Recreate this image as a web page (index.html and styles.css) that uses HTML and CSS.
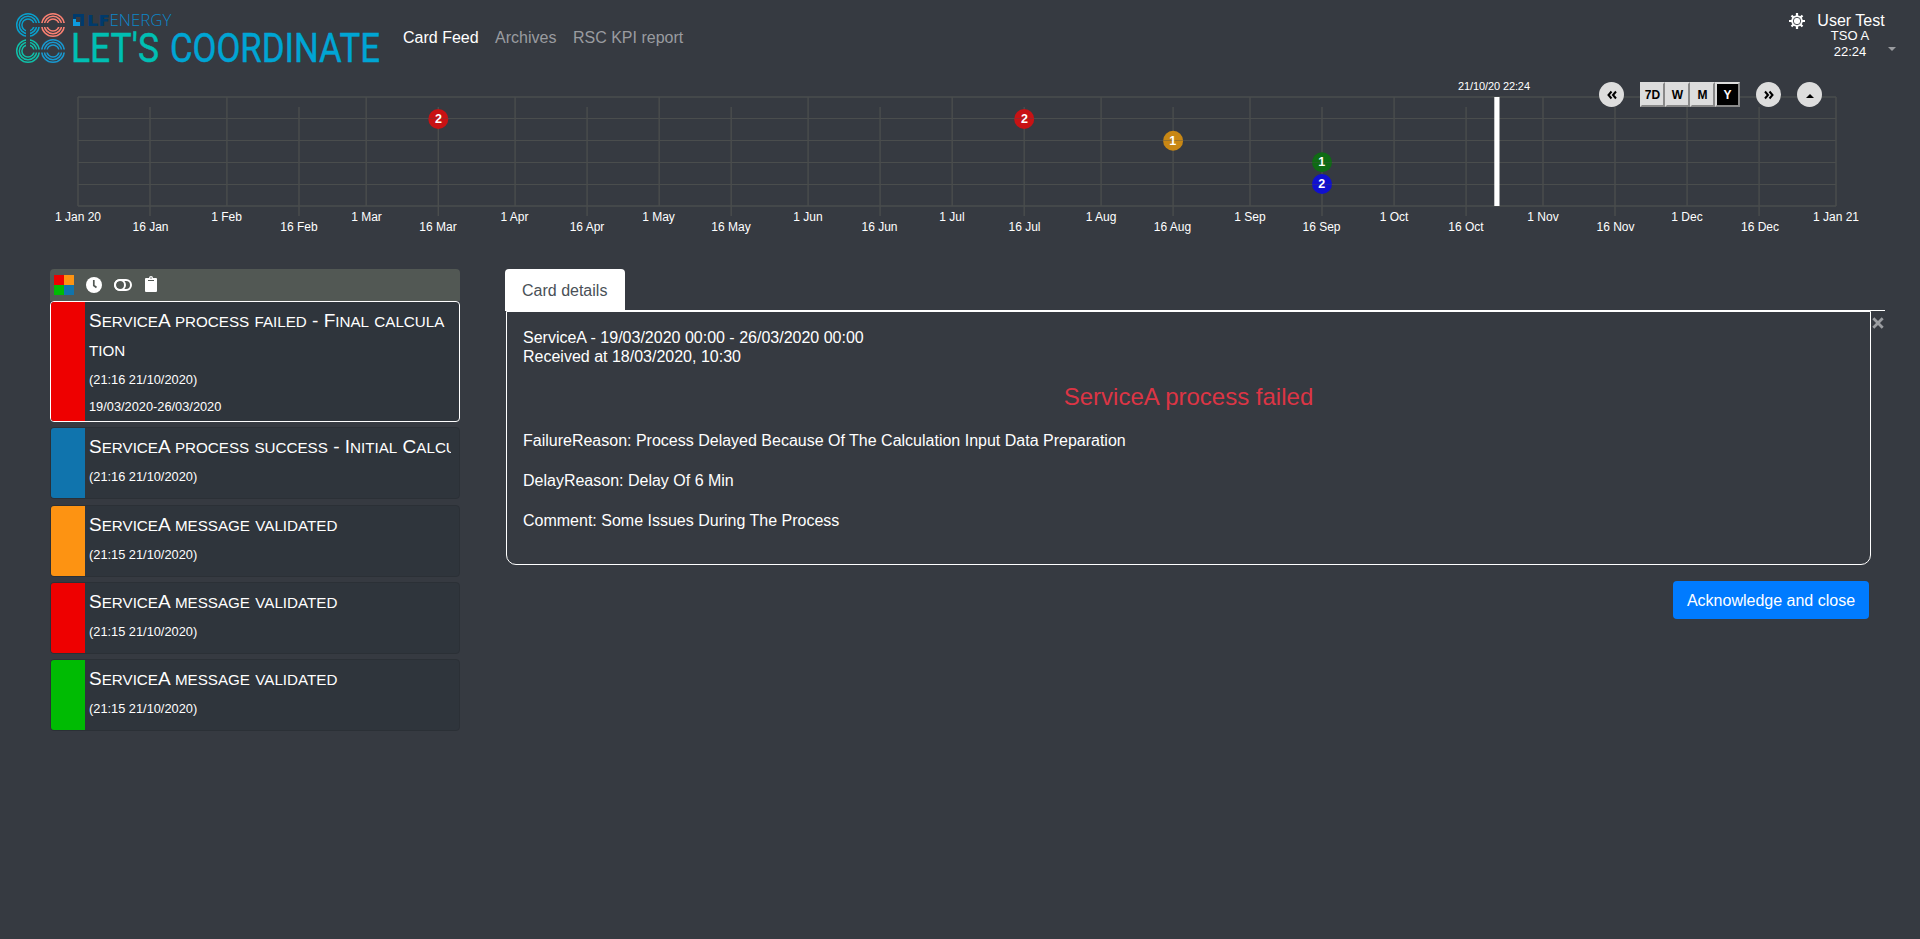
FILE: index.html
```html
<!DOCTYPE html>
<html lang="en">
<head>
<meta charset="utf-8">
<title>Let's Coordinate</title>
<link rel="stylesheet" href="styles.css">
</head>
<body>
<header class="topbar">
  <svg class="logo" width="390" height="72" viewBox="0 0 390 72">
    <defs>
      <g id="rings" fill="none" stroke-width="1.5">
        <circle r="11.3"/><circle r="8.7"/><circle r="6.1"/>
      </g>
    </defs>
    <g stroke="#0a9fcc"><use href="#rings" x="28" y="25"/></g>
    <g stroke="#fa8072"><use href="#rings" x="53" y="25"/></g>
    <g stroke="#10bfa8"><use href="#rings" x="28" y="51"/></g>
    <g stroke="#1898d0"><use href="#rings" x="53" y="51"/></g>
    <g fill="#363a41">
      <rect x="32" y="23" width="8" height="4"/><rect x="26" y="29" width="4" height="18"/>
      <rect x="41" y="23" width="7" height="4"/><rect x="58" y="23" width="8" height="4"/>
      <rect x="32" y="49.500" width="16" height="3"/><rect x="58" y="49.500" width="8" height="3"/>
    </g>
    <path d="M73 14h11v12h-3.500v-9H76v3h-3z" fill="#003a6c"/>
    <path d="M73 19h3v3h4v4h-7z" fill="#0c9be0"/>
    <text class="logo-lf" x="87" y="26" textLength="22" lengthAdjust="spacingAndGlyphs">LF</text>
    <text class="logo-energy" x="109.500" y="26" textLength="62" lengthAdjust="spacingAndGlyphs">ENERGY</text>
    <text class="logo-name lets" transform="translate(71 62) scale(.88 1)" textLength="100" lengthAdjust="spacingAndGlyphs">LET'S</text>
    <text class="logo-name coord" transform="translate(170 62) scale(.85 1)" textLength="247" lengthAdjust="spacingAndGlyphs">COORDINATE</text>
  </svg>
  <nav class="nav">
    <a class="active">Card Feed</a><a>Archives</a><a>RSC KPI report</a>
  </nav>
  <svg class="gear" width="16" height="16" viewBox="0 0 16 16">
    <g stroke="#fff" stroke-width="2.200"><path d="M8 0v16M0 8h16M2.500 2.500l11 11M13.500 2.500l-11 11"/></g>
    <circle cx="8" cy="8" r="5.800" fill="#fff"/>
    <circle cx="8" cy="8" r="3.700" fill="none" stroke="#363a41" stroke-width=".9"/>
  </svg>
  <div class="user"><div class="name">User Test</div><div>TSO A</div><div>22:24</div></div>
  <div class="caret"></div>
</header>

<section class="timeline">
  <svg class="chart" width="1920" height="165" viewBox="0 75 1920 165">
    <path class="grid thick" d="M78 97H1836M78 206H1836"/>
    <path class="grid" d="M78 118.500H1836M78 140.500H1836M78 162.500H1836M78 184.500H1836"/>
    <path class="grid thick" d="M78 97V206M226.900 97V206M366.200 97V206M515.100 97V206M659.200 97V206M808.100 97V206M952.200 97V206M1101.100 97V206M1250 97V206M1394.100 97V206M1543 97V206M1687.100 97V206M1836 97V206"/>
    <path class="grid thick" d="M150 107V216M299 107V216M438.300 107V216M587.100 107V216M731.200 107V216M880.100 107V216M1024.200 107V216M1173.100 107V216M1322 107V216M1466.100 107V216M1615 107V216M1759.100 107V216"/>
    <g class="tick">
      <text x="78" y="221">1 Jan 20</text><text x="226.500" y="221">1 Feb</text><text x="366.500" y="221">1 Mar</text><text x="514.500" y="221">1 Apr</text><text x="658.500" y="221">1 May</text><text x="808" y="221">1 Jun</text><text x="952" y="221">1 Jul</text><text x="1101" y="221">1 Aug</text><text x="1250" y="221">1 Sep</text><text x="1394" y="221">1 Oct</text><text x="1543" y="221">1 Nov</text><text x="1687" y="221">1 Dec</text><text x="1836" y="221">1 Jan 21</text>
      <text x="150.500" y="231">16 Jan</text><text x="299" y="231">16 Feb</text><text x="438" y="231">16 Mar</text><text x="587" y="231">16 Apr</text><text x="731" y="231">16 May</text><text x="879.500" y="231">16 Jun</text><text x="1024.500" y="231">16 Jul</text><text x="1172.500" y="231">16 Aug</text><text x="1321.500" y="231">16 Sep</text><text x="1466" y="231">16 Oct</text><text x="1615.500" y="231">16 Nov</text><text x="1760" y="231">16 Dec</text>
    </g>
    <text class="now-label" x="1494" y="90" textLength="72">21/10/20 22:24</text>
    <rect x="1494.300" y="97" width="5.200" height="109" fill="#fff"/>
    <g class="bubble">
      <circle cx="438.300" cy="119" r="10" fill="#c81214"/><circle cx="1024.200" cy="119" r="10" fill="#c81214"/>
      <circle cx="1173.100" cy="140.700" r="10" fill="#c88714"/><circle cx="1322" cy="162.300" r="10" fill="#0f6b14"/><circle cx="1322" cy="184" r="10" fill="#1010cf"/>
      <path class="grid faint" d="M428 118.500H448M1014 118.500H1034M1163 140.500H1183M1312 162.500H1332M1312 184.500H1332"/>
      <text x="438.500" y="123">2</text><text x="1024.500" y="123">2</text><text x="1172.700" y="145">1</text><text x="1321.700" y="166">1</text><text x="1321.700" y="188">2</text>
    </g>
  </svg>
  <div class="controls">
    <button class="round"><svg width="12" height="10" viewBox="0 0 12 10"><path d="M5.500 1.500 2.500 5l3 3.500M10 1.500 7 5l3 3.500"/></svg></button>
    <div class="zoom"><button>7D</button><button>W</button><button>M</button><button class="on">Y</button></div>
    <button class="round next"><svg width="12" height="10" viewBox="0 0 12 10"><path d="m2 1.500 3 3.500-3 3.500M6.500 1.500l3 3.500-3 3.500"/></svg></button>
    <button class="round"><span class="up"></span></button>
  </div>
</section>

<main class="main">
  <section class="feed">
    <div class="filters">
      <svg width="90" height="22" viewBox="0 0 90 22">
        <path fill="#ee0000" d="M0 1h10v10H0z"/><path fill="#fd9312" d="M10 1h10v10H10z"/><path fill="#00bb03" d="M0 11h10v10H0z"/><path fill="#1074ad" d="M10 11h10v10H10z"/>
        <circle cx="40" cy="11" r="8" fill="#fff"/><path d="M39.800 6v5.500l2.700 2" fill="none" stroke="#525854" stroke-width="1.700"/>
        <g fill="none" stroke="#fff" stroke-width="2"><rect x="61" y="6" width="16" height="10" rx="5"/><circle cx="66" cy="11" r="5"/></g>
      </svg>
      <svg class="clip" width="12" height="17" viewBox="0 0 12 17"><path fill="#fff" d="M1 2h3a2 2 0 0 1 4 0h3q1 0 1 1v12q0 1-1 1H1q-1 0-1-1V3q0-1 1-1z"/><path d="M3 4.500h6" stroke="#525854"/><circle cx="6" cy="2" r=".7" fill="#525854"/></svg>
    </div>
    <article class="card selected"><div class="sev red"></div><div class="body"><h3>S<span>ervice</span>A <span>process</span> <span>failed</span> - F<span>inal</span> <span>calculation</span></h3><p>(21:16 21/10/2020)</p><p>19/03/2020-26/03/2020</p></div></article>
    <article class="card"><div class="sev blue"></div><div class="body"><h3>S<span>ervice</span>A <span>process</span> <span>success</span> - I<span>nitial</span> C<span>alculation</span></h3><p>(21:16 21/10/2020)</p></div></article>
    <article class="card"><div class="sev orange"></div><div class="body"><h3>S<span>ervice</span>A <span>message</span> <span>validated</span></h3><p>(21:15 21/10/2020)</p></div></article>
    <article class="card"><div class="sev red"></div><div class="body"><h3>S<span>ervice</span>A <span>message</span> <span>validated</span></h3><p>(21:15 21/10/2020)</p></div></article>
    <article class="card last"><div class="sev green"></div><div class="body"><h3>S<span>ervice</span>A <span>message</span> <span>validated</span></h3><p>(21:15 21/10/2020)</p></div></article>
  </section>
  <section class="details">
    <div class="tabs"><div class="tab">Card details</div></div>
    <div class="row">
      <div class="panel">
        <p class="meta">ServiceA - 19/03/2020 00:00 - 26/03/2020 00:00</p>
        <p class="meta">Received at 18/03/2020, 10:30</p>
        <h2>ServiceA process failed</h2>
        <p class="line">FailureReason: Process Delayed Because Of The Calculation Input Data Preparation</p>
        <p class="line">DelayReason: Delay Of 6 Min</p>
        <p class="line">Comment: Some Issues During The Process</p>
      </div>
      <svg class="close" width="12" height="12" viewBox="0 0 12 12"><path d="m1.300 1.300 9.400 9.400m0-9.400-9.400 9.400" stroke="#9b9da1" stroke-width="2.800"/></svg>
    </div>
    <button class="ack">Acknowledge and close</button>
  </section>
</main>
</body>
</html>
```

FILE: styles.css
```css
* { box-sizing: border-box; }
body { margin: 0; height: 939px; overflow: hidden; background: #363a41; color: #fff; font: 16px/24px "Liberation Sans", Arial, sans-serif; }
h2, h3, p { margin: 0; font-weight: 400; }
button { font-family: inherit; padding: 0; }

.topbar { display: flex; height: 75px; align-items: flex-start; }
.logo { flex: none; }
.logo-lf { font: 800 16.500px "Open Sans", sans-serif; fill: #003a6c; }
.logo-energy { font: 300 16.500px "Open Sans", sans-serif; fill: #0c86c8; }
.logo-name { font: 400 40.500px Roboto, sans-serif; stroke-width: .5; }
.lets { fill: #00bfb3; stroke: #00bfb3; }
.coord { fill: #00a5d4; stroke: #00a5d4; }
.nav { display: flex; gap: 16.500px; margin: 26px auto 0 13px; color: #9a9ca0; }
.nav .active { color: #fff; }
.gear { margin: 13px 4px 0 0; }
.user { width: 80px; margin-top: 11px; padding-left: 4px; text-align: center; font-size: 13px; line-height: 16px; white-space: nowrap; }
.user .name { font-size: 16px; line-height: 20px; height: 17px; }
.user > div:nth-child(n+2) { margin-right: 2px; }
.caret { width: 8px; margin: 47px 24px 0 -1px; border: 4px solid transparent; border-top-color: #9a9ca0; border-bottom: 0; }

.timeline { position: relative; height: 165px; }
.chart { display: block; }
.grid { stroke: #4a4d4d; stroke-width: 1; fill: none; }
.thick { stroke-width: 1.400; }
.faint { opacity: .35; }
.tick, .now-label { font-size: 12px; fill: #fff; text-anchor: middle; }
.now-label { font-size: 11px; }
.bubble text { font-size: 12.500px; font-weight: 700; fill: #fff; text-anchor: middle; }
.controls { position: absolute; top: 7px; right: 98px; display: flex; }
.round { width: 25px; height: 25px; border: 0; border-radius: 50%; background: #ddd; display: flex; align-items: center; justify-content: center; }
.round svg { fill: none; stroke: #000; stroke-width: 2; }
.next { margin-right: 16px; }
.up { border: 4px solid transparent; border-bottom-color: #000; border-top: 0; margin-top: 2px; }
.zoom { display: flex; margin: 0 16px; }
.zoom button { width: 25px; height: 25px; border: 2px outset #ddd; background: #ddd; color: #000; font-size: 12px; font-weight: 700; }
.zoom .on { background: #000; color: #fff; }

.main { display: flex; padding: 29px 35px 0 50px; gap: 45px; }
.feed { width: 410px; }
.filters { height: 32px; padding: 5px 4px; background: #525854; border-radius: 4px 4px 0 0; display: flex; }
.filters svg { flex: none; }
.clip { margin: 2px 0 0 1px; }
.card { display: flex; height: 72px; margin-bottom: 5.300px; border: 1px solid #2b3036; border-radius: 4px; background: #2f353c; overflow: hidden; }
.card.selected { height: 121px; border-color: #fff; }
.sev { width: 34px; flex: none; }
.red { background: #ee0000; }
.blue { background: #1074ad; }
.orange { background: #fd9312; }
.green { background: #00bb03; }
.body { width: 366px; padding: 4px 0 0 4px; overflow: hidden; white-space: nowrap; }
.body h3 { font-size: 19px; line-height: 29px; margin-bottom: 2px; }
.body h3 span { font-size: .8em; line-height: 1; text-transform: uppercase; }
.selected h3 { white-space: normal; word-break: break-all; }
.last .body { padding-top: 4px; }
.body p { font-size: 12.800px; line-height: 27px; }

.details { width: 1380px; display: flex; flex-direction: column; }
.tabs { height: 42px; border-bottom: 1px solid #fff; }
.tab { width: 120px; height: 41px; padding: 10px 0 0 17px; background: #fff; color: #495057; border-radius: 4px 4px 0 0; }
.row { display: flex; }
.panel { width: 1365px; height: 254px; margin-left: 1px; border: 1px solid #fff; border-radius: 0 0 10px 10px; padding: 16px; }
.meta { line-height: 19px; }
.panel h2 { margin: 17px 0 18px; font-size: 24px; line-height: 28px; color: #dc3545; text-align: center; }
.line { height: 40px; line-height: 24px; }
.close { margin: 6px 0 0 1px; }
.ack { align-self: flex-end; width: 196px; height: 38px; margin: 16px 16px 0 0; border: 0; border-radius: 4px; background: #007bff; color: #fff; font-size: 16px; padding-top: 1px; }
```
